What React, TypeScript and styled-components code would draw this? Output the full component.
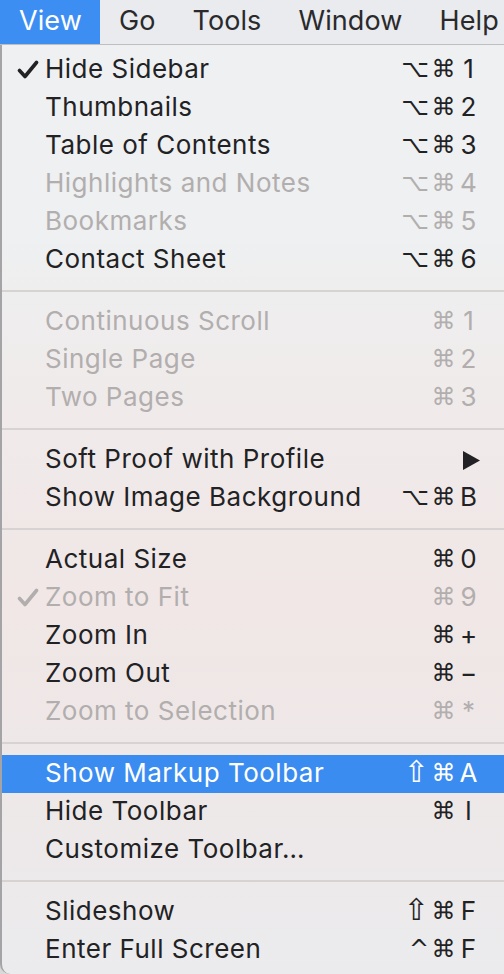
import React from "react";
import styled, { createGlobalStyle } from "styled-components";

const Global = createGlobalStyle`
  html, body { margin: 0; padding: 0; }
  body {
    width: 504px;
    height: 974px;
    overflow: hidden;
    background: #d9d9d9;
    font-family: Inter, "Liberation Sans", Arial, sans-serif;
    -webkit-font-smoothing: antialiased;
  }
`;

const Page = styled.div`
  width: 504px;
  height: 974px;
  display: flex;
  flex-direction: column;
  overflow: hidden;
`;

const MenuBar = styled.div`
  height: 44px;
  display: flex;
  align-items: stretch;
  background: #e9ebee;
  border-bottom: 1px solid #bdbec2;
  flex-shrink: 0;
`;

const BarTitle = styled.div<{ $active?: boolean }>`
  display: flex;
  align-items: center;
  padding: 0 18px 4px 19px;
  font-size: 27px;
  letter-spacing: 0.1px;
  white-space: nowrap;
  color: ${(p) => (p.$active ? "#ffffff" : "#2a2a2c")};
  background: ${(p) => (p.$active ? "#3d8ef2" : "transparent")};
`;

const Menu = styled.div`
  flex: 1;
  display: flex;
  flex-direction: column;
  padding-top: 6px;
  border-left: 2px solid #a4a4a6;
  border-bottom-left-radius: 10px;
  background: linear-gradient(
    180deg,
    #eef0f2 0%,
    #eef0f1 20%,
    #f0eaea 40%,
    #f0e7e6 60%,
    #eee8e8 80%,
    #ebebed 100%
  );
`;

const Row = styled.div<{ $disabled?: boolean; $selected?: boolean }>`
  height: 38px;
  display: flex;
  align-items: center;
  padding: 0 25px 0 0;
  font-size: 26px;
  letter-spacing: 0.5px;
  color: ${(p) => (p.$selected ? "#ffffff" : p.$disabled ? "#b2aeae" : "#222224")};
  background: ${(p) => (p.$selected ? "#3b8cf1" : "transparent")};
`;

const CheckCell = styled.div`
  width: 43px;
  display: flex;
  justify-content: flex-end;
  padding-right: 6px;
  box-sizing: border-box;
`;

const Label = styled.div`
  flex: 1;
  white-space: nowrap;
  padding-bottom: 3px;
`;

const Shortcut = styled.div`
  display: flex;
  align-items: center;
`;

const Mod = styled.span<{ $big?: boolean }>`
  font-family: "DejaVu Sans", sans-serif;
  font-size: ${(p) => (p.$big ? "30px" : "24px")};
  line-height: 1;
  margin-right: 2px;
  padding-bottom: ${(p) => (p.$big ? "4px" : "2px")};
`;

const Key = styled.span`
  width: 21px;
  text-align: center;
  font-size: 26px;
  letter-spacing: 0;
  padding-bottom: 3px;
`;

const Arrow = styled.span`
  width: 18px;
  display: flex;
  justify-content: flex-end;
  margin-right: -1px;
`;

const Separator = styled.div`
  height: 24px;
  display: flex;
  align-items: center;
  &::after {
    content: "";
    flex: 1;
    height: 2px;
    background: #d7d3d3;
  }
`;

type Item = {
  label: string;
  mods?: string[];
  key?: string;
  disabled?: boolean;
  checked?: boolean;
  selected?: boolean;
  submenu?: boolean;
};

const OC = ["⌥", "⌘"];
const C = ["⌘"];
const SC = ["⇧", "⌘"];

const sections: Item[][] = [
  [
    { label: "Hide Sidebar", mods: OC, key: "1", checked: true },
    { label: "Thumbnails", mods: OC, key: "2" },
    { label: "Table of Contents", mods: OC, key: "3" },
    { label: "Highlights and Notes", mods: OC, key: "4", disabled: true },
    { label: "Bookmarks", mods: OC, key: "5", disabled: true },
    { label: "Contact Sheet", mods: OC, key: "6" },
  ],
  [
    { label: "Continuous Scroll", mods: C, key: "1", disabled: true },
    { label: "Single Page", mods: C, key: "2", disabled: true },
    { label: "Two Pages", mods: C, key: "3", disabled: true },
  ],
  [
    { label: "Soft Proof with Profile", submenu: true },
    { label: "Show Image Background", mods: OC, key: "B" },
  ],
  [
    { label: "Actual Size", mods: C, key: "0" },
    { label: "Zoom to Fit", mods: C, key: "9", disabled: true, checked: true },
    { label: "Zoom In", mods: C, key: "+" },
    { label: "Zoom Out", mods: C, key: "−" },
    { label: "Zoom to Selection", mods: C, key: "*", disabled: true },
  ],
  [
    { label: "Show Markup Toolbar", mods: SC, key: "A", selected: true },
    { label: "Hide Toolbar", mods: C, key: "l" },
    { label: "Customize Toolbar…" },
  ],
  [
    { label: "Slideshow", mods: SC, key: "F" },
    { label: "Enter Full Screen", mods: ["^", "⌘"], key: "F" },
  ],
];

const Check = ({ color }: { color: string }) => (
  <svg width="22" height="20" viewBox="0 0 22 20">
    <path
      d="M2.5 10.5 L8 16.5 L19.5 2.5"
      fill="none"
      stroke={color}
      strokeWidth="3.6"
      strokeLinecap="round"
      strokeLinejoin="round"
    />
  </svg>
);

const Triangle = () => (
  <svg width="17" height="19" viewBox="0 0 17 19">
    <path d="M0 0 L17 9.5 L0 19 Z" fill="#222224" />
  </svg>
);

export default function App() {
  return (
    <Page>
      <Global />
      <MenuBar>
        <BarTitle $active>View</BarTitle>
        <BarTitle>Go</BarTitle>
        <BarTitle>Tools</BarTitle>
        <BarTitle>Window</BarTitle>
        <BarTitle>Help</BarTitle>
      </MenuBar>
      <Menu>
        {sections.map((sec, si) => (
          <React.Fragment key={si}>
            {si > 0 && <Separator />}
            {sec.map((it) => (
              <Row key={it.label} $disabled={it.disabled} $selected={it.selected}>
                <CheckCell>
                  {it.checked && <Check color={it.disabled ? "#b2aeae" : "#222224"} />}
                </CheckCell>
                <Label>{it.label}</Label>
                {it.submenu && (
                  <Arrow>
                    <Triangle />
                  </Arrow>
                )}
                {it.mods && (
                  <Shortcut>
                    {it.mods.map((m, i) => (
                      <Mod key={i} $big={m === "⇧"}>
                        {m}
                      </Mod>
                    ))}
                    <Key>{it.key}</Key>
                  </Shortcut>
                )}
              </Row>
            ))}
          </React.Fragment>
        ))}
      </Menu>
    </Page>
  );
}
